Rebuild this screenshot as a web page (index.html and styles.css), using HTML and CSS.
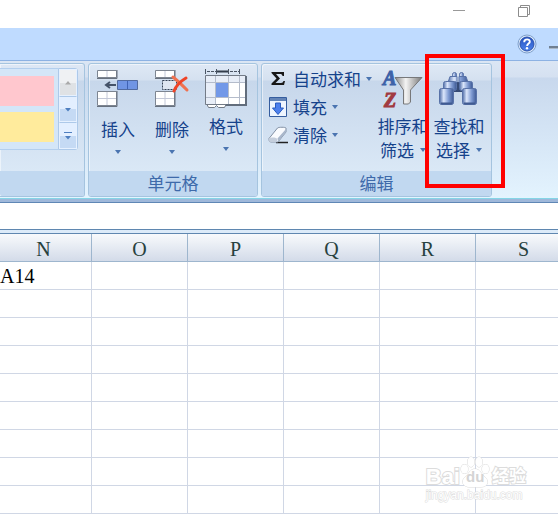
FILE: index.html
```html
<!DOCTYPE html>
<html lang="zh-CN">
<head>
    <meta charset="UTF-8">
    <meta name="viewport" content="width=device-width, initial-scale=1.0">
    <title>Excel</title>
    <link rel="stylesheet" href="styles.css">
</head>
<body>
    <div class="titlebar">
        <button class="win-btn" aria-label="最小化">
            <svg width="14" height="14" viewBox="0 0 14 14"><path d="M1 6.500h12" stroke="#999"/></svg>
        </button>
        <button class="win-btn" aria-label="还原">
            <svg width="14" height="14" viewBox="0 0 14 14" fill="none" stroke="#8c8c8c"><path d="M1.500 3.500h9v9h-9zM3.500 3.500v-2h9v9h-2"/></svg>
        </button>
    </div>

    <div class="tabstrip">
        <button class="help" aria-label="帮助">
            <svg width="20" height="20" viewBox="0 0 20 20">
                <defs>
                    <linearGradient id="helpFill" x1="0" y1="0" x2="0" y2="1"><stop offset="0" stop-color="#2450c0"/><stop offset="1" stop-color="#4d83ec"/></linearGradient>
                </defs>
                <circle cx="10" cy="10" r="9" fill="#dceafb" stroke="#7f9fca"/>
                <circle cx="10" cy="10" r="7" fill="url(#helpFill)" stroke="#2a50aa"/>
                <path d="M7.200 8.200c0-3.800 6-3.500 5.600-.4-.2 1.800-2.600 1.800-2.700 4.200" fill="none" stroke="#fff" stroke-width="1.900"/>
                <circle cx="10" cy="14.300" r="1.200" fill="#fff"/>
            </svg>
        </button>
        <button class="mini" aria-label="最小化工作簿"></button>
    </div>

    <div class="ribbon">
        <section class="group group-styles">
            <div class="group-body">
                <div class="gallery">
                    <div class="swatch bad"></div>
                    <div class="swatch neutral"></div>
                </div>
                <div class="gallery-scroll">
                    <button class="off" aria-label="上一行"><svg width="8" height="5" viewBox="0 0 8 5"><path d="M1 4.500L4 1l3 3.500z" fill="#aaa"/></svg></button>
                    <button aria-label="下一行"><svg width="8" height="5" viewBox="0 0 8 5"><path d="M1 1h6L4 4.500z" fill="#4f7fc0"/></svg></button>
                    <button aria-label="其他"><svg width="8" height="8" viewBox="0 0 8 8"><path d="M0 .5h8" stroke="#4f7fc0"/><path d="M1 4h6L4 7.500z" fill="#4f7fc0"/></svg></button>
                </div>
            </div>
            <div class="group-title"></div>
        </section>

        <section class="group group-cells">
            <div class="group-body">
                <button class="big">
                    <svg width="44" height="40" viewBox="0 0 44 40">
                        <g fill="#fff" stroke="#7d8591"><path d="M1.500 1.500h19v7h-19zM1.500 22.500h19v14h-19z"/><path d="M11 2v6M11 23v13M2 29.500h18" stroke="#c3c8d8"/></g>
                        <path d="M21 1v8.500H1M21 22v15.500H1" fill="none" stroke="#68717e"/>
                        <path d="M21.500 11.500h20v9h-20z" fill="#7095e4" stroke="#526b9f"/>
                        <path d="M31.500 12v8" stroke="#3f62b5"/>
                        <path d="M20 16H10m4-3l-4 3 4 3" fill="none" stroke="#445369" stroke-width="2"/>
                    </svg>
                    <span>插入</span>
                    <i class="arrow"></i>
                </button>
                <button class="big">
                    <svg width="44" height="40" viewBox="0 0 44 40">
                        <g fill="#fff" stroke="#7d8591"><path d="M5.500 1.500h19v7h-19zM5.500 22.500h19v14h-19z"/><path d="M15 2v6M15 23v13M6 29.500h18" stroke="#c3c8d8"/></g>
                        <path d="M25 1v8.500H5M25 22v15.500H5" fill="none" stroke="#68717e"/>
                        <path d="M12.500 11.500h14v9h-14z" fill="#dfe6f1" stroke="#344154" stroke-dasharray="2 1"/>
                        <path d="M23 8c5 4 9 8 14 13" fill="none" stroke="#f0714f" stroke-width="3" stroke-linecap="round"/>
                        <path d="M36 9c-5 3-10 8-12 13" fill="none" stroke="#ef4427" stroke-width="3" stroke-linecap="round"/>
                    </svg>
                    <span>删除</span>
                    <i class="arrow"></i>
                </button>
                <button class="big format">
                    <svg width="44" height="41" viewBox="0 0 44 41">
                        <path d="M1.500 0v5M12.500 0v5M24.500 0v5M35.500 0v5" stroke="#4b5564"/>
                        <path d="M3 2.500h9M26 2.500h9" stroke="#4b5564" stroke-dasharray="3 1"/>
                        <path d="M13 2.500h11" stroke="#333d4b" stroke-width="2"/>
                        <path d="M2.500 34.500l2 4h6l2-2 2 2h6l2-4z" fill="#fff" stroke="#737b87"/>
                        <path d="M1.500 6.500h40v29h-40z" fill="#fff" stroke="#737b87"/>
                        <path d="M2 7h39v6H2zM2 13h10v22H2z" fill="#e8eef8"/>
                        <path d="M11.500 7v28M24.500 7v28M35.500 7v28M2 13.500h39M2 28.500h39" stroke="#b4bccb" fill="none"/>
                        <path d="M12 14h12v14H12z" fill="#7298e8"/>
                        <path d="M42 7v29H22" stroke="#626d7c" stroke-width="2" fill="none"/>
                    </svg>
                    <span>格式</span>
                    <i class="arrow"></i>
                </button>
            </div>
            <div class="group-title">单元格</div>
        </section>

        <section class="group group-edit">
            <div class="group-body">
                <div class="small-list">
                    <button class="small">
                        <svg width="20" height="22" viewBox="0 0 20 22"><path d="M3.500 4h12.500v4h-1.500c-.3-1.500-1-2-2.500-2H8l4 4.500L7.500 15H13c1.500 0 2-1 2.500-2H17l-1 4H3.500v-1.500l5-5-5-5.500z" fill="#171717"/></svg>
                        <span>自动求和</span><i class="arrow"></i>
                    </button>
                    <button class="small">
                        <svg width="20" height="22" viewBox="0 0 20 22">
                            <path d="M1.500 1.500h17v19h-17z" fill="#eef5ff" stroke="#355d9f"/>
                            <path d="M2 2h16v3H2z" fill="#6384b7"/>
                            <path d="M7.500 7h5v5h3L10 18.500 4.500 12h3z" fill="#4d80ed" stroke="#285bc0"/>
                        </svg>
                        <span>填充</span><i class="arrow"></i>
                    </button>
                    <button class="small">
                        <svg width="20" height="22" viewBox="0 0 20 22">
                            <path d="M8 18.500h12" stroke="#222" stroke-width="1.500"/>
                            <path d="M1 14.500L9.500 4c1-1 8-1 8.500 0v4l-8 10H3c-2 0-2-2-2-3.500z" fill="#f9fbfe" stroke="#8290a4"/>
                            <path d="M1 14.500c2-1.500 6-1.500 8 0v3.500H3c-2 0-2-2-2-3.500z" fill="#c4cedc"/>
                            <path d="M9.500 14.500L18 5v3l-8 10z" fill="#a9b7cb"/>
                        </svg>
                        <span>清除</span><i class="arrow"></i>
                    </button>
                </div>
                <button class="big two-line">
                    <svg width="44" height="40" viewBox="0 0 44 40">
                        <defs>
                            <linearGradient id="funnel"><stop offset="0" stop-color="#888"/><stop offset=".4" stop-color="#f4f4f4"/><stop offset="1" stop-color="#777"/></linearGradient>
                        </defs>
                        <path d="M14 8.500h27L29.500 21v12l-2 2h-5V21z" fill="url(#funnel)" stroke="#77787a"/>
                        <text class="letter-a" x="2" y="16">A</text>
                        <text class="letter-z" x="3" y="38">Z</text>
                    </svg>
                    <span>排序和</span>
                    <span class="second">筛选<i class="arrow"></i></span>
                </button>
                <button class="big two-line marked">
                    <svg width="44" height="40" viewBox="0 0 44 40">
                        <defs>
                            <linearGradient id="barrel"><stop offset="0" stop-color="#4f6da8"/><stop offset=".3" stop-color="#dbe6fb"/><stop offset=".65" stop-color="#7e9ad2"/><stop offset="1" stop-color="#3c5893"/></linearGradient>
                        </defs>
                        <path d="M17 13h8v10h-8z" fill="#354a75"/>
                        <g fill="url(#barrel)" stroke="#5872a8">
                            <rect x="15.500" y="3.500" width="4" height="5" rx="2"/>
                            <rect x="22.500" y="3.500" width="4" height="5" rx="2"/>
                            <path d="M13 7.500h7v6h-9zM22 7.500h7l2 6h-9z"/>
                            <rect x="6.500" y="12.500" width="13" height="9" rx="2"/>
                            <rect x="22.500" y="12.500" width="13" height="9" rx="2"/>
                            <rect x="2.500" y="19.500" width="14" height="16" rx="2"/>
                            <rect x="25.500" y="19.500" width="14" height="16" rx="2"/>
                        </g>
                        <path d="M4 34.500h11M27 34.500h11" stroke="#405b91" stroke-width="2"/>
                    </svg>
                    <span>查找和</span>
                    <span class="second">选择<i class="arrow"></i></span>
                </button>
            </div>
            <div class="group-title">编辑</div>
        </section>
    </div>

    <div class="formula-bar"></div>

    <main class="sheet">
        <table>
            <thead>
                <tr><th class="first">N</th><th>O</th><th>P</th><th>Q</th><th>R</th><th>S</th></tr>
            </thead>
            <tbody>
                <tr><td>A14</td><td></td><td></td><td></td><td></td><td></td></tr>
                <tr><td></td><td></td><td></td><td></td><td></td><td></td></tr>
                <tr><td></td><td></td><td></td><td></td><td></td><td></td></tr>
                <tr><td></td><td></td><td></td><td></td><td></td><td></td></tr>
                <tr><td></td><td></td><td></td><td></td><td></td><td></td></tr>
                <tr><td></td><td></td><td></td><td></td><td></td><td></td></tr>
                <tr><td></td><td></td><td></td><td></td><td></td><td></td></tr>
                <tr><td></td><td></td><td></td><td></td><td></td><td></td></tr>
                <tr><td></td><td></td><td></td><td></td><td></td><td></td></tr>
            </tbody>
        </table>
        <div class="watermark">
            <div class="brand">
                <span>Bai</span>
                <span class="paw">
                    <svg width="30" height="32" viewBox="0 0 30 32" fill="#fff" stroke="#d9d9d9">
                        <ellipse cx="4.500" cy="13" rx="3.500" ry="4.500"/>
                        <ellipse cx="11" cy="6" rx="3.500" ry="5"/>
                        <ellipse cx="19" cy="6" rx="3.500" ry="5"/>
                        <ellipse cx="25.500" cy="13" rx="3.500" ry="4.500"/>
                        <path d="M15 13c-5 0-6 5-10 8-5 5-1 10 4 10h12c6 0 9-5 4-10-4-3-5-8-10-8z"/>
                    </svg>
                    <span class="du">du</span>
                </span>
                <span class="cn">经验</span>
            </div>
            <div class="site">jingyan.baidu.com</div>
        </div>
    </main>
</body>
</html>
```
FILE: styles.css
```css
* {
    box-sizing: border-box;
}
body {
    margin: 0;
    background-color: #fff;
    font-family: "Noto Sans CJK SC", sans-serif;
    overflow: hidden;
}
button {
    padding: 0;
    border: none;
    background: none;
    font-family: inherit;
    color: inherit;
}
svg {
    display: block;
    flex-shrink: 0;
    overflow: visible;
}

/* window chrome */
.titlebar {
    display: flex;
    justify-content: flex-end;
    gap: 51px;
    height: 28px;
    padding: 4px 27px 0 0;
}
.win-btn {
    height: 14px;
}
.tabstrip {
    display: flex;
    justify-content: flex-end;
    align-items: center;
    gap: 12px;
    height: 33px;
    background-color: #bfdbff;
    border-bottom: 1px solid #8db2e3;
}
.mini {
    width: 9px;
    height: 3px;
    margin-top: 6px;
    background-color: #6f7f92;
    border-bottom: 1px solid #a9b7c8;
}

/* ribbon */
.ribbon {
    display: flex;
    gap: 3px;
    height: 142px;
    padding-top: 2px;
    background: linear-gradient(#dbe6f4 0, #d5e1f1 16px, #c8d8ed 17px, #e3f3fe 136px, #e3f6ff 137px);
    border-bottom: 1px solid #5f87b5;
    box-shadow: inset 0 -3px #9fb8da, inset 0 -4px #84d5e6;
}
.group {
    display: flex;
    flex-direction: column;
    height: 134px;
    border: 1px solid #a5c4df;
    border-radius: 3px;
    background: linear-gradient(#dee8f5 0, #d5e1f0 16px, #c7d7eb 17px, #dae8f6 107px);
    box-shadow: inset 1px 1px rgba(255, 255, 255, 0.5);
    color: #15428b;
}
.group-styles {
    width: 85px;
    border-left: none;
    border-radius: 0 3px 3px 0;
}
.group-cells {
    width: 170px;
}
.group-edit {
    width: 231px;
}
.group-body {
    display: flex;
    flex: 1;
}
.group-cells .group-body {
    padding-left: 2px;
}
.group-title {
    height: 25px;
    background-color: #c1d8f0;
    color: #3e6aaa;
    font-size: 17px;
    line-height: 24px;
    text-align: center;
    border-radius: 0 0 2px 2px;
}
.gallery {
    display: flex;
    flex-direction: column;
    gap: 6px;
    width: 58px;
    height: 82px;
    margin-top: 4px;
    padding: 7px 4px 0 0;
    background-color: #d4e6f8;
    border-top: 1px solid #b3cfee;
    border-bottom: 1px solid #b3cfee;
}
.swatch {
    height: 30px;
}
.bad {
    background-color: #ffc7ce;
}
.neutral {
    background-color: #ffeb9c;
}
.gallery-scroll {
    display: flex;
    flex-direction: column;
    width: 20px;
    height: 82px;
    margin-top: 4px;
    border: 1px solid #adc9e9;
    border-radius: 0 3px 3px 0;
}
.gallery-scroll button {
    display: flex;
    flex: 1;
    align-items: center;
    justify-content: center;
    background: linear-gradient(#e3efff 50%, #c5daf4 50%);
    border: 1px solid #e6f1ff;
}
.gallery-scroll button + button {
    border-top-color: #adc9e9;
}
.gallery-scroll .off {
    background: linear-gradient(#eff1f3 50%, #dfe2e5 50%);
}
.big {
    display: flex;
    flex-direction: column;
    align-items: center;
    width: 54px;
    padding-top: 5px;
    font-size: 17px;
    line-height: 24px;
    white-space: nowrap;
}
.big > span {
    margin-top: 8px;
}
.big > .arrow {
    margin-top: 9px;
}
.format > span {
    margin-top: 4px;
}
.arrow {
    width: 6px;
    height: 4px;
    background-color: #4a74b0;
    clip-path: polygon(0 0, 100% 0, 50% 100%);
}
.small-list {
    display: flex;
    flex-direction: column;
    width: 113px;
    padding: 1px 0 0 6px;
}
.small {
    display: flex;
    align-items: center;
    height: 28px;
    font-size: 17px;
    line-height: 28px;
    white-space: nowrap;
}
.small span {
    margin: 0 5px;
}
.two-line {
    width: 56px;
}
.two-line > span {
    margin-top: 5px;
}
.two-line .second {
    display: flex;
    align-items: center;
    gap: 6px;
    margin-top: 0;
}
.letter-a,
.letter-z {
    font: bold italic 20px "Liberation Serif", serif;
    fill: #3e62a8;
    stroke: #3e62a8;
}
.letter-z {
    fill: #a13a41;
    stroke: #a13a41;
}
.marked {
    position: relative;
}
.marked::after {
    content: "";
    position: absolute;
    inset: -10px -18px -17px -6px;
    border: 4px solid #f00;
}

/* worksheet */
.formula-bar {
    height: 31px;
    border-bottom: 1px solid #5f87b0;
    box-shadow: inset 0 -3px #dcebf9, inset 0 -4px #5f87b0;
}
.sheet {
    position: relative;
    overflow: hidden;
}
table {
    width: 572px;
    table-layout: fixed;
    border-collapse: separate;
    border-spacing: 0;
    font-family: "Liberation Serif", serif;
    font-size: 20px;
    line-height: 27px;
}
th,
td {
    height: 28px;
    padding: 0;
    border-right: 1px solid #d0d7e5;
    border-bottom: 1px solid #d0d7e5;
}
td {
    padding-top: 2px;
    line-height: 25px;
}
th {
    width: 96px;
    padding-top: 3px;
    line-height: 24px;
    background: linear-gradient(#f8fafc, #d3dbe9);
    border-color: #9eb6ce;
    color: #27413e;
    font-weight: normal;
}
.first {
    width: 92px;
    padding-right: 4px;
}
.watermark {
    position: absolute;
    right: 32px;
    bottom: 12px;
    color: #fff;
    font-family: "Liberation Sans", "Noto Sans CJK SC", sans-serif;
    -webkit-text-stroke: 2px #dcdcdc;
    paint-order: stroke fill;
}
.brand {
    display: flex;
    align-items: flex-end;
    font-size: 22px;
    font-weight: bold;
    line-height: 22px;
}
.paw {
    position: relative;
}
.du {
    position: absolute;
    left: 6px;
    bottom: 0;
    font-size: 15px;
    color: #d4d4d4;
    -webkit-text-stroke: 0;
}
.cn {
    margin-left: 2px;
    font-size: 17px;
}
.site {
    font-size: 12px;
    line-height: 14px;
    -webkit-text-stroke: 1px #dcdcdc;
}
```
